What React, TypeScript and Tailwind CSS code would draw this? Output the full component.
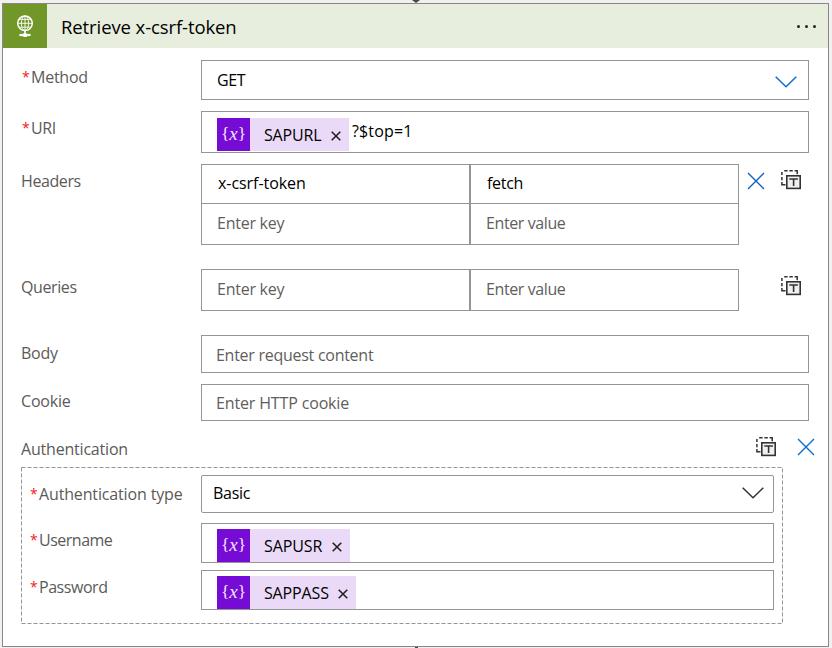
import React from "react";

const BORDER = "border-[#979593]";

function Text({ className = "", children }: { className?: string; children: React.ReactNode }) {
  return <span className={`block whitespace-nowrap leading-6 ${className}`}>{children}</span>;
}

function Label({ required, className = "", text = "" }: { required?: boolean; className?: string; text: string }) {
  return (
    <div className={`flex shrink-0 text-[#5c5a58] ${className}`}>
      {required && <span className="w-[10px] shrink-0 pl-px text-[14px] leading-6 text-[#f02020]">*</span>}
      <Text>{text}</Text>
    </div>
  );
}

function Chevron({ className = "" }: { className?: string }) {
  return (
    <svg className={className} width="22" height="12" viewBox="0 0 22 12" fill="none" stroke="currentColor" strokeWidth="1.5">
      <path d="M0.7 0.7 11 10.8 21.3 0.7" />
    </svg>
  );
}

function Cross({ className = "" }: { className?: string }) {
  return (
    <svg className={className} width="18" height="18" viewBox="0 0 18 18" fill="none" stroke="currentColor" strokeWidth="1.4">
      <path d="M1 1 17 17M17 1 1 17" />
    </svg>
  );
}

function SwitchMode({ className = "" }: { className?: string }) {
  return (
    <svg className={className} width="20" height="20" viewBox="0 0 20 20" fill="none" stroke="#333333">
      <path strokeWidth="1.5" d="M3.2 .8h3.4M8.4 .8h3.4M13.6 .8h2.6v3.4M.9 2v3M.9 7v3.2M.9 12v2.8h3.6" />
      <rect x="5.8" y="5.8" width="13.4" height="12.6" strokeWidth="1.6" fill="#f0f0f0" />
      <path strokeWidth="1.6" d="M8.3 9h8.6M12.6 9v7" />
    </svg>
  );
}

function Globe() {
  return (
    <svg width="18" height="23" viewBox="0 0 18 23" fill="none" stroke="#ffffff">
      <circle cx="9" cy="8.3" r="7.3" strokeWidth="1.5" />
      <ellipse cx="9" cy="8.3" rx="3.6" ry="7.3" strokeWidth="0.9" />
      <path strokeWidth="0.9" d="M9 1v15M1.7 8.3h14.6M3 4.4h12M3 12.2h12" />
      <path strokeWidth="1.6" d="M9 15.5v4.5" />
      <path strokeWidth="2.2" d="M3.4 20h11.2" />
      <path strokeWidth="3.6" d="M7.2 20.2h3.6" />
    </svg>
  );
}

function Token({ name, width, tracking }: { name: string; width: string; tracking: string }) {
  return (
    <div className={`flex h-[33px] shrink-0 items-center bg-[#ebdaf7] ${width}`}>
      <div className="flex h-[33px] w-[33px] shrink-0 items-center justify-center bg-[#770bd6] pb-[2px] font-['Liberation_Serif',serif] text-[17.5px] leading-none text-[#f3e6fc]">
        <span>{"{"}</span>
        <i className="text-[19px] leading-none">x</i>
        <span>{"}"}</span>
      </div>
      <Text className={`ml-[14px] ${tracking}`}>{name}</Text>
      <svg className="mt-[3px] mr-[8px] ml-auto" width="10" height="10" viewBox="0 0 10 10" stroke="#222222" strokeWidth="1.6">
        <path d="M.7 .7 9.3 9.3M9.3 .7 .7 9.3" />
      </svg>
    </div>
  );
}

function Pair({ height, first, second, muted, pad, edge = "" }: { height: string; first: React.ReactNode; second: React.ReactNode; muted?: boolean; pad: string; edge?: string }) {
  return (
    <div className={`flex w-[538px] border ${BORDER} ${height} ${edge} ${muted ? "text-[#605e5c]" : "text-black"}`}>
      <div className={`w-[269px] border-r-2 pl-[16px] ${BORDER} ${pad}`}>{first}</div>
      <div className={`flex-1 pl-[16px] ${pad}`}>{second}</div>
    </div>
  );
}

export default function App() {
  return (
    <div className="relative h-[648px] w-[832px] overflow-hidden bg-[#f2f0f1] pt-[3px] pl-[2px] font-['Open_Sans','Noto_Sans',sans-serif] text-[16px] text-black">
      <div className="absolute top-0 left-[412px] h-0 w-0 border-x-4 border-t-[3px] border-x-transparent border-t-[#484644]" />
      <div className="absolute top-[647px] left-[415px] h-px w-[3px] bg-[#484644]" />
      <div className="h-[644px] w-[827px] border border-[#8a8688] bg-white">
        <header className="flex h-[44px] items-center bg-[#e8eede]">
          <div className="flex h-[44px] w-[44px] items-center justify-center bg-[#709727]">
            <Globe />
          </div>
          <h1 className="mt-[2px] ml-[14px] text-[18.5px] leading-6 tracking-[-0.1px]">Retrieve x-csrf-token</h1>
          <div className="mt-[1px] mr-[12px] ml-auto flex gap-[5px]">
            <i className="h-[3px] w-[3px] rounded-full bg-[#222]" />
            <i className="h-[3px] w-[3px] rounded-full bg-[#222]" />
            <i className="h-[3px] w-[3px] rounded-full bg-[#222]" />
          </div>
        </header>

        <main className="pt-[12px] pl-[18px]">
          <div className="flex h-[51px]">
            <Label required text="Method" className="w-[180px] pt-[5px] tracking-[-0.25px]" />
            <div className={`flex h-[40px] w-[608px] justify-between border pt-[7px] pr-[11px] pl-[15px] ${BORDER}`}>
              <Text className="tracking-[-0.4px]">GET</Text>
              <Chevron className="mt-[8px] text-[#0f6cd0]" />
            </div>
          </div>

          <div className="flex h-[53px]">
            <Label required text="URI" className="w-[180px] pt-[5px] tracking-[-0.4px]" />
            <div className={`flex h-[42px] w-[608px] border pt-[6px] pl-[15px] ${BORDER}`}>
              <Token name="SAPURL" width="w-[132px]" tracking="tracking-[-0.15px]" />
              <Text className="ml-[3px] pt-px tracking-[0.15px]">?$top=1</Text>
            </div>
          </div>

          <div className="flex h-[105px]">
            <Label text="Headers" className="w-[180px] pt-[5px] tracking-[-0.4px]" />
            <div className="shrink-0">
              <Pair
                height="h-[40px]"
                pad="pt-[6px]"
                first={<Text className="tracking-[-0.05px]">x-csrf-token</Text>}
                second={<Text className="tracking-[-0.3px]">fetch</Text>}
              />
              <Pair
                height="h-[41px]"
                pad="pt-[7px]"
                muted
                edge="border-t-0"
                first={<Text className="-ml-px tracking-[-0.25px]">Enter key</Text>}
                second={<Text className="-ml-px tracking-[-0.4px]">Enter value</Text>}
              />
            </div>
            <Cross className="mt-[8px] ml-[8px] text-[#0f5fc0]" />
            <SwitchMode className="mt-[6px] ml-[16px]" />
          </div>

          <div className="flex h-[66px]">
            <Label text="Queries" className="w-[180px] pt-[6px] tracking-[-0.4px]" />
            <Pair
              height="h-[42px]"
              pad="pt-[7px]"
              muted
              first={<Text className="-ml-px tracking-[-0.25px]">Enter key</Text>}
              second={<Text className="-ml-px tracking-[-0.4px]">Enter value</Text>}
            />
            <SwitchMode className="mt-[7px] ml-[42px]" />
          </div>

          <div className="flex h-[49px]">
            <Label text="Body" className="w-[180px] pt-[6px] tracking-[-0.25px]" />
            <div className={`h-[38px] w-[608px] border pt-[7px] pl-[14px] text-[#605e5c] ${BORDER}`}>
              <Text className="tracking-[-0.27px]">Enter request content</Text>
            </div>
          </div>

          <div className="flex h-[49px]">
            <Label text="Cookie" className="w-[180px] pt-[5px] tracking-[-0.2px]" />
            <div className={`h-[37px] w-[608px] border pt-[6px] pl-[14px] text-[#605e5c] ${BORDER}`}>
              <Text className="tracking-[-0.15px]">Enter HTTP cookie</Text>
            </div>
          </div>

          <div className="flex h-[34px]">
            <Label text="Authentication" className="w-[735px] pt-[4px] tracking-[-0.2px]" />
            <SwitchMode className="mt-[4px]" />
            <Cross className="mt-[5px] ml-[21px] text-[#0f6cd0]" />
          </div>

          <section className="relative h-[157px] w-[762px] pt-[8px] pl-[8px]">
            <svg className="absolute inset-0" width="762" height="157" fill="none" stroke="#979593">
              <rect x="0.5" y="0.5" width="761" height="156" strokeDasharray="4 2" />
            </svg>
            <div className="flex h-[48px]">
              <Label required text="Authentication type" className="w-[172px] pt-[7px] tracking-[-0.15px]" />
              <div className={`flex h-[38px] w-[573px] justify-between rounded-[2px] border pt-[5px] pr-[9px] pl-[11px] ${BORDER}`}>
                <Text className="tracking-[-0.3px]">Basic</Text>
                <Chevron className="mt-[6px] text-[#333333]" />
              </div>
            </div>
            <div className="flex h-[47px]">
              <Label required text="Username" className="w-[172px] pt-[5px] tracking-[-0.5px]" />
              <div className={`h-[40px] w-[573px] border pt-[5px] pl-[15px] ${BORDER}`}>
                <Token name="SAPUSR" width="w-[133px]" tracking="tracking-[-0.1px]" />
              </div>
            </div>
            <div className="flex h-[47px]">
              <Label required text="Password" className="w-[172px] pt-[5px] tracking-[-0.45px]" />
              <div className={`h-[40px] w-[573px] border pt-[5px] pl-[15px] ${BORDER}`}>
                <Token name="SAPPASS" width="w-[139px]" tracking="tracking-[-0.15px]" />
              </div>
            </div>
          </section>
        </main>
      </div>
    </div>
  );
}
